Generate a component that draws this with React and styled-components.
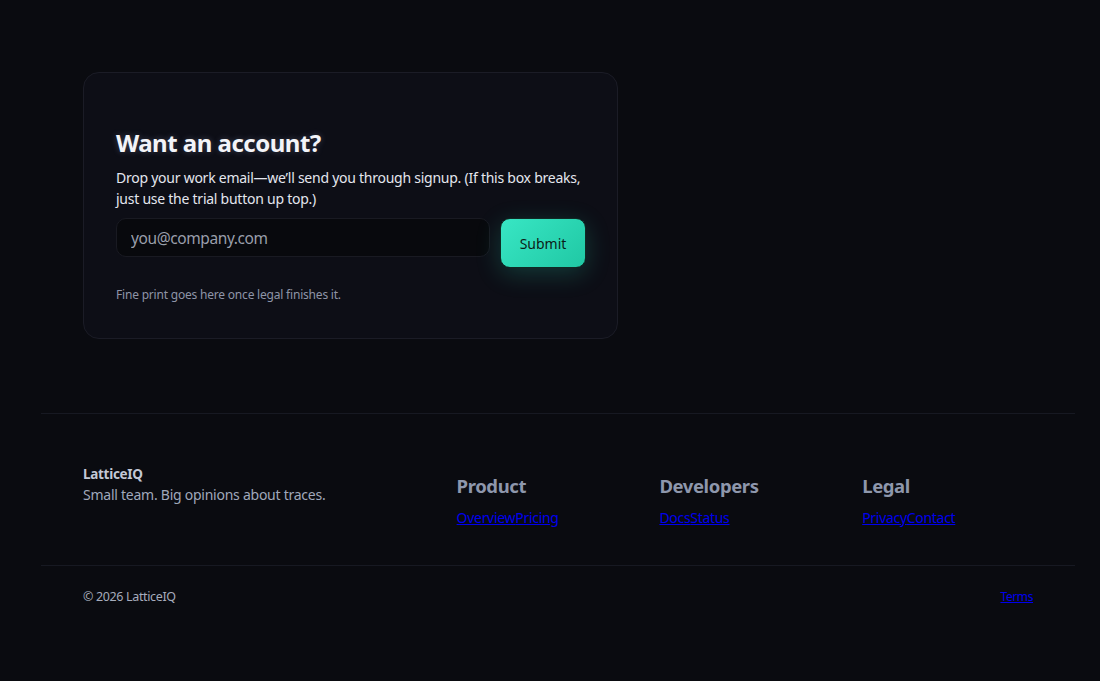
import styled, { createGlobalStyle } from "styled-components";

const GlobalStyle = createGlobalStyle`
  html, body {
    margin: 0;
    background: #0a0b10;
  }
  body {
    font-family: "Noto Sans", "Open Sans", sans-serif;
    color: #e6e8ef;
    min-height: 681px;
  }
`;

const Page = styled.div`
  min-height: 681px;
  background: #0a0b10;
`;

const Section = styled.section`
  padding: 72px 0 74px 83px;
`;

const Card = styled.div`
  width: 535px;
  box-sizing: border-box;
  padding: 55px 31px 34px 32px;
  background: #0d0e16;
  border: 1px solid #1b1c26;
  border-radius: 16px;
`;

const Title = styled.h2`
  margin: 0 0 9px;
  font-size: 24px;
  line-height: 30px;
  font-weight: 700;
  letter-spacing: -0.5px;
  color: #f3f4f8;
  text-shadow: 0 0 6px rgba(200, 210, 255, 0.25);
`;

const Lead = styled.p`
  margin: 0 0 9px;
  font-size: 14px;
  line-height: 21px;
  letter-spacing: -0.25px;
  color: #e4e6ee;
`;

const Form = styled.form`
  display: flex;
  align-items: flex-start;
  gap: 10px;
`;

const Input = styled.input`
  flex: 1;
  height: 39px;
  box-sizing: border-box;
  padding: 0 14px;
  background: #08090d;
  border: 1px solid #191a22;
  border-radius: 10px;
  font-family: inherit;
  font-size: 15.5px;
  letter-spacing: -0.4px;
  color: #e6e8ef;
  outline: none;
  &::placeholder {
    color: #9a9fab;
  }
`;

const Button = styled.button`
  flex: 0 0 86px;
  height: 50px;
  border: 1px solid #0f2a24;
  border-radius: 10px;
  background: linear-gradient(135deg, #38e6c4, #20c8a4);
  color: #0c1c18;
  font-family: inherit;
  font-size: 14px;
  cursor: pointer;
  box-shadow: 0 6px 24px rgba(40, 210, 175, 0.22);
`;

const Fine = styled.p`
  margin: 18px 0 0;
  font-size: 12px;
  line-height: 18px;
  letter-spacing: -0.2px;
  color: #8e94a7;
`;

const Footer = styled.footer`
  margin: 0 25px 0 41px;
  border-top: 1px solid #171922;
`;

const FooterGrid = styled.div`
  display: grid;
  grid-template-columns: 2fr 1fr 1fr 1fr;
  gap: 32px;
  padding: 50px 42px 37px;
`;

const Brand = styled.div`
  display: flex;
  flex-direction: column;
`;

const BrandName = styled.strong`
  font-size: 13.5px;
  line-height: 20px;
  letter-spacing: -0.3px;
  color: #c3c8d6;
`;

const Tagline = styled.span`
  font-size: 14px;
  line-height: 21px;
  letter-spacing: -0.25px;
  color: #a0a8bb;
`;

const Column = styled.div`
  display: flex;
  flex-direction: column;
`;

const ColumnTitle = styled.h3`
  margin: 9px 0 8px;
  font-size: 18.5px;
  line-height: 26px;
  font-weight: 700;
  letter-spacing: -0.4px;
  color: #8e97ac;
`;

const Links = styled.div`
  display: flex;
  font-size: 14px;
  line-height: 21px;
  letter-spacing: -0.3px;
`;

const Link = styled.a`
  color: #0000ee;
`;

const Bottom = styled.div`
  display: flex;
  justify-content: space-between;
  align-items: center;
  padding: 22px 42px 40px;
  border-top: 1px solid #171922;
  font-size: 12.5px;
  line-height: 18px;
  letter-spacing: -0.35px;
  color: #a6acbc;
`;

const SmallLink = styled(Link)`
  font-size: 12px;
  letter-spacing: -0.4px;
`;

const columns = [
  { title: "Product", links: ["Overview", "Pricing"] },
  { title: "Developers", links: ["Docs", "Status"] },
  { title: "Legal", links: ["Privacy", "Contact"] },
];

export default function App() {
  return (
    <Page>
      <GlobalStyle />
      <Section>
        <Card>
          <Title>Want an account?</Title>
          <Lead>
            Drop your work email—we’ll send you through signup. (If this box
            breaks, just use the trial button up top.)
          </Lead>
          <Form onSubmit={(e) => e.preventDefault()}>
            <Input type="email" placeholder="you@company.com" />
            <Button type="submit">Submit</Button>
          </Form>
          <Fine>Fine print goes here once legal finishes it.</Fine>
        </Card>
      </Section>
      <Footer>
        <FooterGrid>
          <Brand>
            <BrandName>LatticeIQ</BrandName>
            <Tagline>Small team. Big opinions about traces.</Tagline>
          </Brand>
          {columns.map((col) => (
            <Column key={col.title}>
              <ColumnTitle>{col.title}</ColumnTitle>
              <Links>
                {col.links.map((l) => (
                  <Link key={l} href="#">
                    {l}
                  </Link>
                ))}
              </Links>
            </Column>
          ))}
        </FooterGrid>
        <Bottom>
          <span>© 2026 LatticeIQ</span>
          <SmallLink href="#">Terms</SmallLink>
        </Bottom>
      </Footer>
    </Page>
  );
}
